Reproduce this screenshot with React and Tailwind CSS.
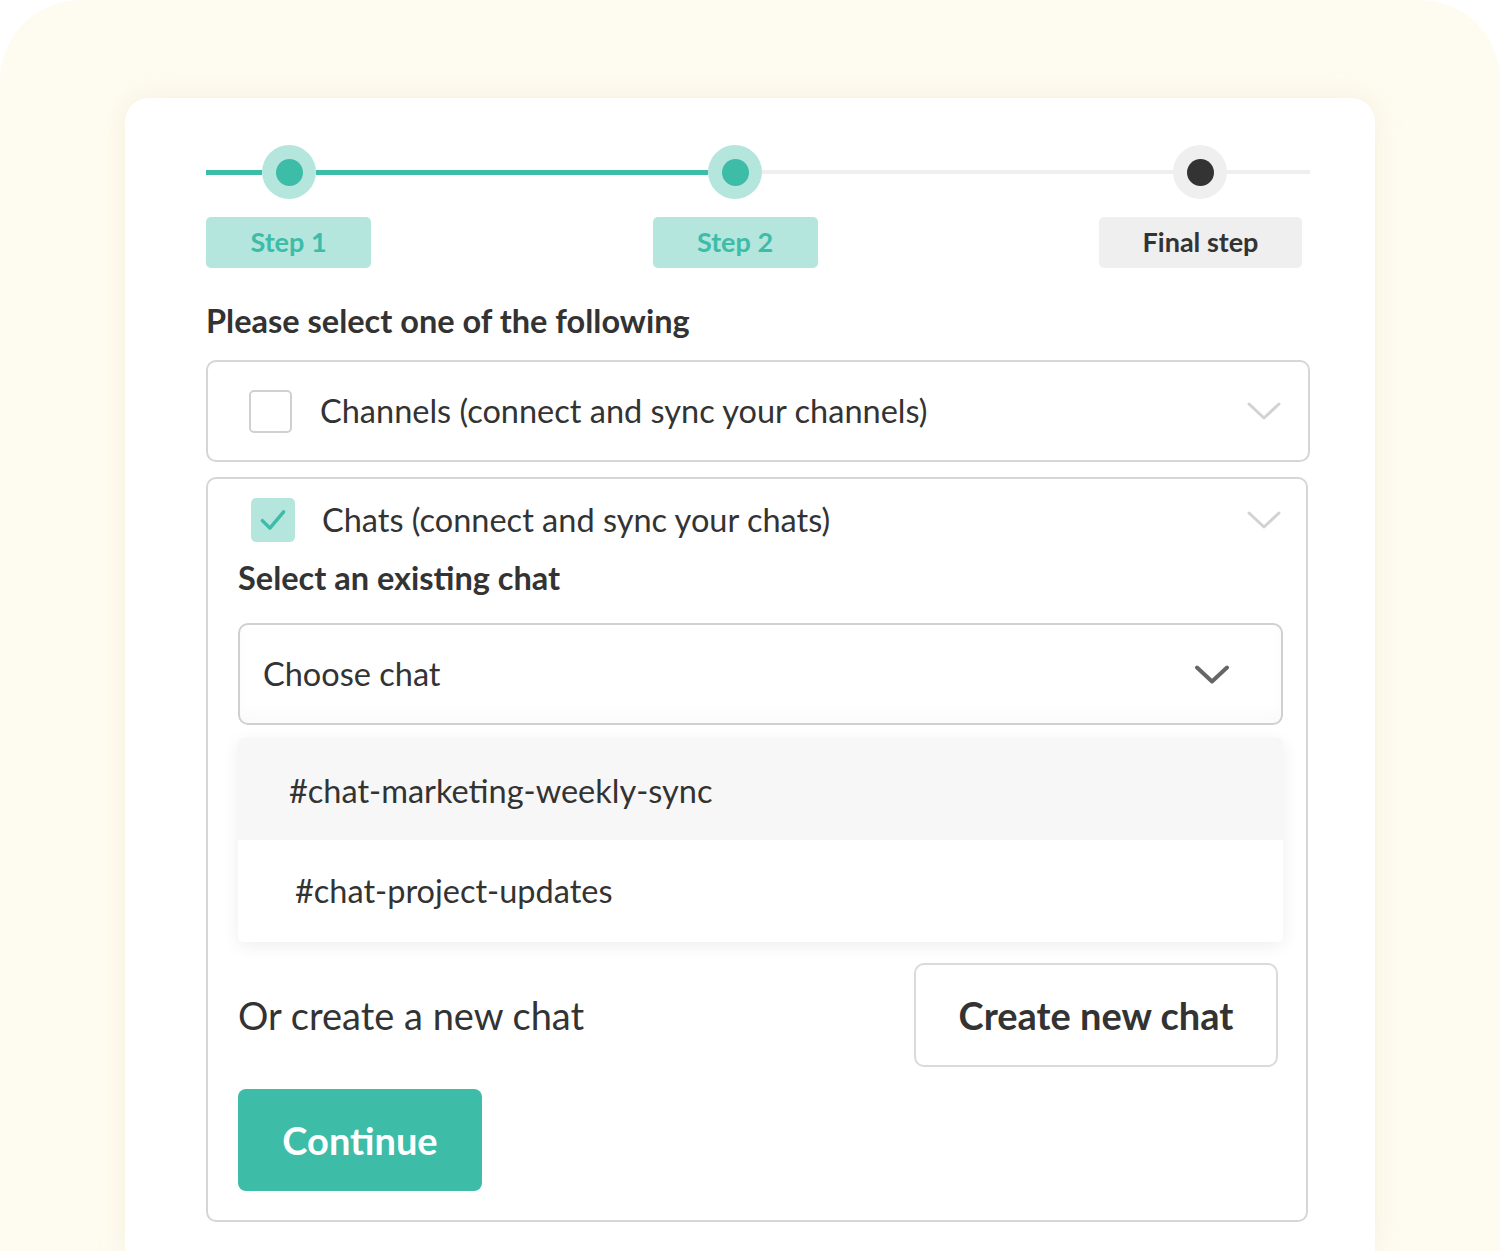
import { useState } from "react";

const Chevron = ({ className = "", stroke = "#d2d2d2", width = 3 }) => (
  <svg viewBox="0 0 34 18" className={className} fill="none">
    <polyline
      points="2,2 17,16 32,2"
      stroke={stroke}
      strokeWidth={width}
      strokeLinecap="round"
      strokeLinejoin="round"
    />
  </svg>
);

const Dot = ({ done }) => (
  <div
    className={`w-[54px] h-[54px] shrink-0 rounded-full flex items-center justify-center ${
      done ? "bg-[#b4e6de]" : "bg-[#efefef]"
    }`}
  >
    <div
      className={`w-[27px] h-[27px] rounded-full ${
        done ? "bg-[#3dbca8]" : "bg-[#333333]"
      }`}
    />
  </div>
);

const App = () => {
  const [chats, setChats] = useState(true);
  const options = ["#chat-marketing-weekly-sync", "#chat-project-updates"];

  return (
    <div
      className="min-h-screen bg-white text-[#333333]"
      style={{ fontFamily: "Lato, 'Open Sans', sans-serif" }}
    >
      <div className="h-[1251px] bg-[#fefbf0] rounded-t-[80px] pt-[98px] px-[125px] overflow-hidden">
        <div className="bg-white h-full rounded-t-[24px] shadow-[0_0_24px_rgba(230,220,190,0.35)] pl-[81px] pt-[47px]">
          {/* stepper */}
          <div className="flex items-center w-[1104px] h-[54px]">
            <div className="w-[56px] h-[5px] bg-[#3dbca8]" />
            <Dot done />
            <div className="flex-1 h-[5px] bg-[#3dbca8]" />
            <Dot done />
            <div className="w-[411px] h-[4px] bg-[#efefef]" />
            <Dot />
            <div className="w-[83px] h-[4px] bg-[#efefef]" />
          </div>
          <div className="flex justify-between w-[1096px] mt-[18px]">
            <div className="w-[165px] h-[51px] rounded-[5px] bg-[#b4e6de] text-[#3dbca8] font-bold text-[27px] flex items-center justify-center">
              Step 1
            </div>
            <div className="w-[165px] h-[51px] rounded-[5px] bg-[#b4e6de] text-[#3dbca8] font-bold text-[27px] flex items-center justify-center">
              Step 2
            </div>
            <div className="w-[203px] h-[51px] rounded-[5px] bg-[#efefef] text-[#333333] font-bold text-[27px] flex items-center justify-center">
              Final step
            </div>
          </div>

          <h2 className="mt-[35px] text-[32.5px] font-bold leading-[36px]">
            Please select one of the following
          </h2>

          {/* channels */}
          <div className="mt-[21px] w-[1104px] h-[102px] border-2 border-[#d6d6d6] rounded-[10px] flex items-center pl-[41px] pr-[27px]">
            <div className="w-[43px] h-[43px] border-2 border-[#d0d0d0] rounded-[5px]" />
            <span className="ml-[28px] text-[32.5px]">
              Channels (connect and sync your channels)
            </span>
            <Chevron className="ml-auto w-[34px] h-[18px]" />
          </div>

          {/* chats */}
          <div className="mt-[15px] w-[1102px] border-2 border-[#d6d6d6] rounded-[10px] pt-[19px] pl-[30px] pr-[23px] pb-[29px]">
            <div className="flex items-center h-[44px]">
              <button
                onClick={() => setChats(!chats)}
                className="ml-[13px] w-[44px] h-[44px] rounded-[5px] bg-[#b4e6de] flex items-center justify-center"
              >
                {chats && (
                  <svg viewBox="0 0 24 24" className="w-[30px] h-[30px]" fill="none">
                    <polyline
                      points="3.5,12.5 9.5,18.5 20.5,5.5"
                      stroke="#3dbca8"
                      strokeWidth="2.8"
                      strokeLinecap="round"
                      strokeLinejoin="round"
                    />
                  </svg>
                )}
              </button>
              <span className="ml-[27px] text-[32.5px]">
                Chats (connect and sync your chats)
              </span>
              <Chevron className="ml-auto mr-[2px] w-[34px] h-[18px]" />
            </div>

            <h3 className="mt-[18px] text-[32.5px] font-bold leading-[36px]">
              Select an existing chat
            </h3>

            <div className="mt-[27px] h-[102px] border-2 border-[#d0d0d0] rounded-[10px] flex items-center pl-[23px] pr-[52px] shadow-[inset_0_-10px_14px_rgba(0,0,0,0.02)]">
              <span className="text-[32.5px]">Choose chat</span>
              <Chevron
                className="ml-auto w-[34px] h-[19px]"
                stroke="#666666"
                width={4}
              />
            </div>

            <div className="mt-[13px] rounded-[6px] bg-white shadow-[0_4px_18px_rgba(0,0,0,0.07)] overflow-hidden">
              {options.map((opt, i) => (
                <div
                  key={opt}
                  className={`h-[102px] flex items-center text-[32.5px] ${
                    i === 0 ? "bg-[#f7f7f7] pl-[51px] pt-[4px]" : "bg-white pl-[57px]"
                  }`}
                >
                  {opt}
                </div>
              ))}
            </div>

            <div className="mt-[21px] flex items-center justify-between pr-[5px]">
              <span className="text-[38px]">Or create a new chat</span>
              <button className="w-[364px] h-[104px] border-2 border-[#dadada] rounded-[10px] text-[38px] font-bold">
                Create new chat
              </button>
            </div>

            <button className="mt-[22px] w-[244px] h-[102px] rounded-[8px] bg-[#3dbca8] text-white text-[38px] font-bold">
              Continue
            </button>
          </div>
        </div>
      </div>
    </div>
  );
};

export default App;
